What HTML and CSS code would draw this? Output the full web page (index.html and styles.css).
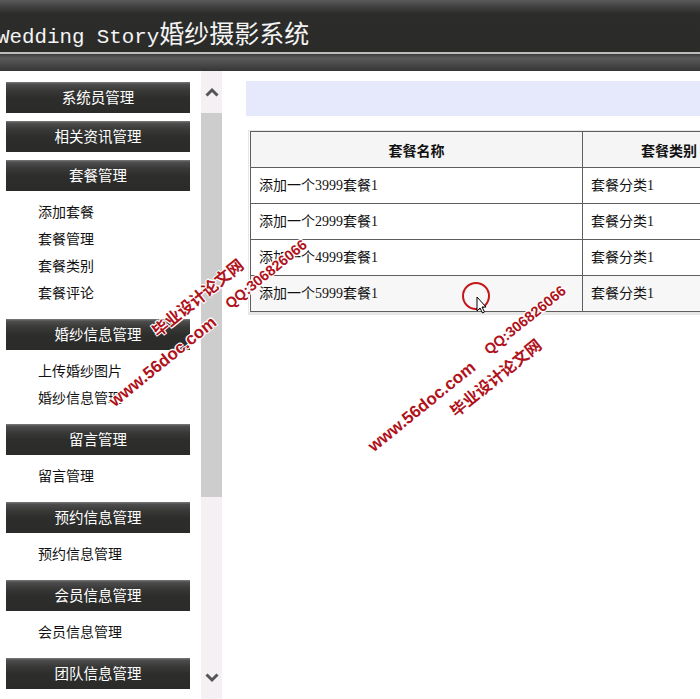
FILE: index.html
```html
<!DOCTYPE html>
<html lang="zh-CN">
<head>
<meta charset="utf-8">
<title>Wedding Story婚纱摄影系统</title>
<link rel="stylesheet" href="styles.css">
</head>
<body>
<header class="top">
  <div class="top-main">
    <h1 class="title"><span class="latin">Wedding Story</span>婚纱摄影系统</h1>
  </div>
  <div class="top-line"></div>
  <div class="top-bar"></div>
</header>
<div class="layout">
  <nav class="sidebar">
    <div class="menu"><div class="menu-title">系统员管理</div></div>
    <div class="menu"><div class="menu-title">相关资讯管理</div></div>
    <div class="menu"><div class="menu-title">套餐管理</div>
      <ul class="menu-items"><li>添加套餐</li><li>套餐管理</li><li>套餐类别</li><li>套餐评论</li></ul>
    </div>
    <div class="menu"><div class="menu-title">婚纱信息管理</div>
      <ul class="menu-items"><li>上传婚纱图片</li><li>婚纱信息管理</li></ul>
    </div>
    <div class="menu"><div class="menu-title">留言管理</div>
      <ul class="menu-items"><li>留言管理</li></ul>
    </div>
    <div class="menu"><div class="menu-title">预约信息管理</div>
      <ul class="menu-items"><li>预约信息管理</li></ul>
    </div>
    <div class="menu"><div class="menu-title">会员信息管理</div>
      <ul class="menu-items"><li>会员信息管理</li></ul>
    </div>
    <div class="menu"><div class="menu-title">团队信息管理</div></div>
  </nav>
  <div class="scrollbar">
    <div class="sb-btn"><svg width="14" height="10" viewBox="0 0 14 10"><path d="M1.5 8.5 L7 3 L12.5 8.5" fill="none" stroke="#555" stroke-width="3"/></svg></div>
    <div class="sb-thumb"></div>
    <div class="sb-track"></div>
    <div class="sb-btn"><svg width="14" height="10" viewBox="0 0 14 10"><path d="M1.5 1.5 L7 7 L12.5 1.5" fill="none" stroke="#555" stroke-width="3"/></svg></div>
  </div>
  <main class="content">
    <div class="info-bar"></div>
    <div class="table-wrap">
      <table class="grid">
        <thead><tr><th class="c1">套餐名称</th><th class="c2">套餐类别</th></tr></thead>
        <tbody>
          <tr><td>添加一个3999套餐1</td><td>套餐分类1</td></tr>
          <tr><td>添加一个2999套餐1</td><td>套餐分类1</td></tr>
          <tr><td>添加一个4999套餐1</td><td>套餐分类1</td></tr>
          <tr class="hover"><td>添加一个5999套餐1</td><td>套餐分类1</td></tr>
        </tbody>
      </table>
    </div>
  </main>
</div>
<div class="wm wm-cn" style="left:197px;top:297px">毕业设计论文网</div>
<div class="wm wm-url" style="left:163px;top:362px">www.56doc.com</div>
<div class="wm wm-qq" style="left:266px;top:274px">QQ:306826066</div>
<div class="wm wm-cn" style="left:495px;top:377px">毕业设计论文网</div>
<div class="wm wm-url" style="left:422px;top:407px">www.56doc.com</div>
<div class="wm wm-qq" style="left:525px;top:320px">QQ:306826066</div>
<div class="cursor-mark">
  <svg width="40" height="44" viewBox="0 0 40 44">
    <circle cx="14" cy="14" r="13" fill="none" stroke="#c4161c" stroke-width="2"/>
    <path d="M15 15 L15 29 L18 26 L20.5 31 L22.5 30 L20 25 L24 25 Z" fill="#fff" stroke="#000" stroke-width="1"/>
  </svg>
</div>
</body>
</html>
```
FILE: styles.css
```css
html, body {
  margin: 0;
  padding: 0;
  background: #fff;
  overflow: hidden;
}
body {
  width: 700px;
  height: 699px;
  font-family: "Noto Sans CJK SC", sans-serif;
  position: relative;
}
.top-main {
  height: 52px;
  background: linear-gradient(#5b5b5b 0, #3f3f3f 7px, #2c2d2b 14px, #2b2c2a 100%);
  overflow: hidden;
}
.title {
  margin: 0 0 0 -3px;
  padding-top: 16px;
  font-weight: normal;
  font-size: 25px;
  line-height: 32px;
  color: #f4f4f4;
  font-family: "Noto Sans CJK SC", sans-serif;
  white-space: nowrap;
}
.title .latin {
  font-family: "Liberation Mono", monospace;
  font-size: 20.8px;
}
.top-line {
  height: 2px;
  background: #bdbdbd;
}
.top-bar {
  height: 17px;
  background: linear-gradient(#3c3c3c 0, #5a5a5a 4px, #4a4a4a 10px, #353535 100%);
}
.layout {
  display: flex;
  height: 628px;
}
.sidebar {
  width: 200px;
  flex: none;
  padding: 11px 0 0 6px;
  box-sizing: border-box;
  overflow: hidden;
}
.menu {
  margin-bottom: 8px;
}
.menu-title {
  width: 184px;
  height: 31px;
  line-height: 29px;
  text-align: center;
  color: #fff;
  font-size: 14.5px;
  background: linear-gradient(#777 0, #6a6a6a 1px, #4e4e4e 2px, #3a3b39 8px, #2d2e2c 16px, #2b2c2a 100%);
}
.menu-items {
  list-style: none;
  margin: 0 0 -8px 0;
  padding: 7px 0 13px 32px;
}
.menu-items li {
  height: 27px;
  line-height: 27px;
  font-size: 14px;
  color: #111;
}
.scrollbar {
  width: 21px;
  flex: none;
  margin-left: 1px;
  background: #f4f0f4;
  display: flex;
  flex-direction: column;
}
.sb-btn {
  height: 42px;
  display: flex;
  align-items: center;
  justify-content: center;
}
.sb-thumb {
  height: 384px;
  background: #cdcdcd;
}
.sb-track {
  flex: 1;
}
.content {
  flex: 1;
  padding: 10px 0 0 24px;
  overflow: hidden;
  min-width: 0;
}
.info-bar {
  height: 35px;
  background: #e5e9fb;
}
.table-wrap {
  margin: 14px 0 0 2px;
  width: 520px;
  border: 1px solid #e6e8e6;
  border-bottom-width: 3px;
  padding-left: 1px;
}
.grid {
  border-collapse: collapse;
  width: 506px;
  font-family: "Liberation Serif", "Noto Sans CJK SC", serif;
  font-size: 14px;
  color: #111;
}
.grid th, .grid td {
  border: 1px solid #5e5e5e;
  height: 35px;
  padding: 0 0 0 8px;
  text-align: left;
  line-height: 20px;
  white-space: nowrap;
}
.grid th {
  background: #f5f5f5;
  text-align: center;
  font-family: "Noto Sans CJK SC", sans-serif;
  font-weight: bold;
  padding: 0;
}
.grid .c1 {
  width: 331px;
}
.grid tbody tr {
  height: 36px;
}
.grid tr.hover td {
  background: #f7f7f7;
}
.wm {
  position: absolute;
  transform: translate(-50%, -50%) rotate(-39deg);
  color: #b0121b;
  font-weight: bold;
  white-space: nowrap;
  text-shadow: 1px 1px 0 #fff, -1px -1px 0 #fff, 1px -1px 0 #fff, -1px 1px 0 #fff;
}
.wm-cn {
  font-family: "Noto Sans CJK SC", sans-serif;
  font-size: 16px;
  line-height: 18px;
}
.wm-url {
  font-family: "Liberation Sans", sans-serif;
  font-size: 17px;
  line-height: 18px;
}
.wm-qq {
  font-family: "Liberation Sans", sans-serif;
  font-size: 14.5px;
  line-height: 16px;
}
.cursor-mark {
  position: absolute;
  left: 462px;
  top: 282px;
  width: 40px;
  height: 44px;
}
```
